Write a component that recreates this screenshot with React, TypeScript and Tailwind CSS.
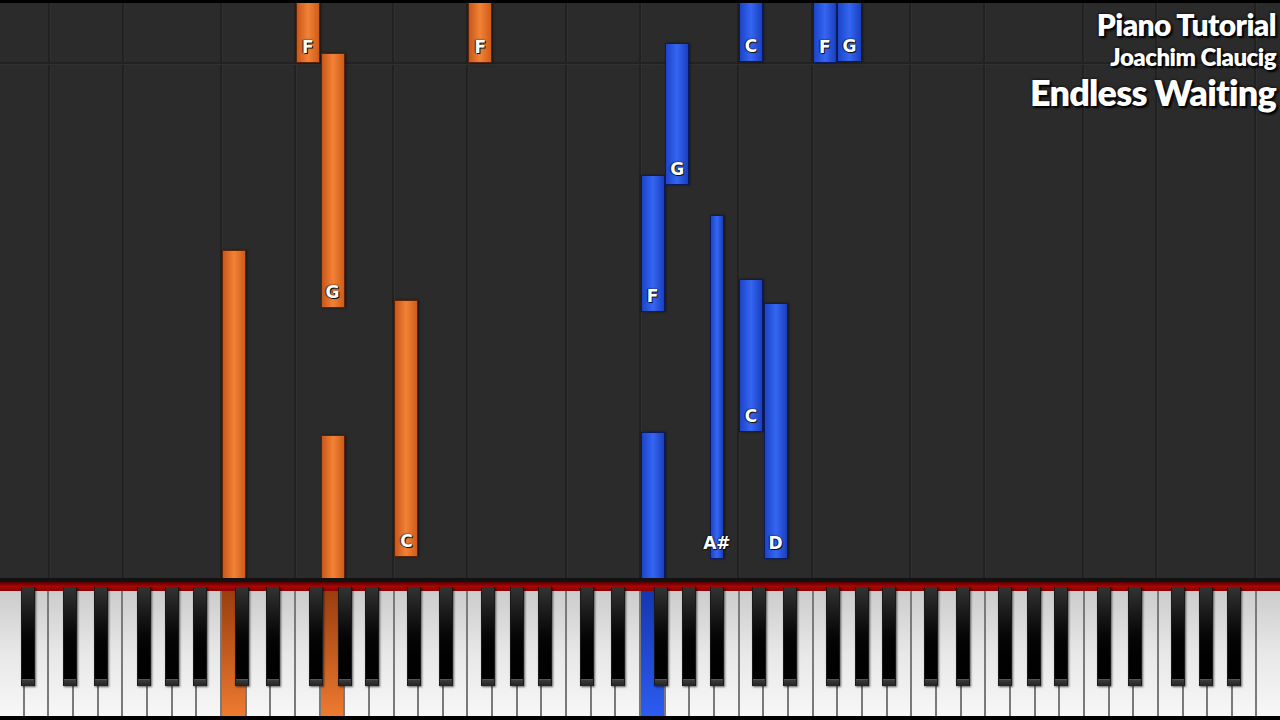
import type { CSSProperties } from "react";

const WHITE_COUNT = 52;
const KEY_W = 1280 / WHITE_COUNT;
const AREA_TOP = 3;

// note names of white keys in an octave starting at C
const whiteNames = ["C", "D", "E", "F", "G", "A", "B"];
// offsets of black keys from the white key boundary (px), by the white key on their left
const blackOffset: Record<string, number> = { C: -4, D: 2.5, F: -4, G: 0, A: 3 };

type Hand = "left" | "right";

interface Note {
    key: number; // white key index (black: the white key on its left)
    black?: boolean;
    top: number;
    bottom: number;
    label?: string;
    hand: Hand;
}

// white key index: A0 = 0, B0 = 1, C1 = 2 ...
const notes: Note[] = [
    { key: 9, top: 250, bottom: 600, hand: "left" },
    { key: 12, top: -10, bottom: 63, label: "F", hand: "left" },
    { key: 13, top: 53, bottom: 308, label: "G", hand: "left" },
    { key: 13, top: 435, bottom: 600, hand: "left" },
    { key: 16, top: 300, bottom: 557, label: "C", hand: "left" },
    { key: 19, top: -10, bottom: 63, label: "F", hand: "left" },
    { key: 26, top: 175, bottom: 312, label: "F", hand: "right" },
    { key: 26, top: 432, bottom: 600, hand: "right" },
    { key: 27, top: 43, bottom: 185, label: "G", hand: "right" },
    { key: 28, black: true, top: 215, bottom: 559, label: "A#", hand: "right" },
    { key: 30, top: -10, bottom: 62, label: "C", hand: "right" },
    { key: 30, top: 279, bottom: 432, label: "C", hand: "right" },
    { key: 31, top: 303, bottom: 559, label: "D", hand: "right" },
    { key: 33, top: -10, bottom: 63, label: "F", hand: "right" },
    { key: 34, top: -10, bottom: 62, label: "G", hand: "right" },
];

const pressed: Record<number, Hand> = { 9: "left", 13: "left", 26: "right" };

function whiteName(i: number) {
    // A0 is index 0
    return whiteNames[(i + 5) % 7];
}

function blackLeft(i: number) {
    // black key sitting between white key i and i + 1
    const boundary = (i + 1) * KEY_W;
    return boundary + blackOffset[whiteName(i)] - 7;
}

const blackKeys: number[] = [];
for (let i = 0; i < WHITE_COUNT - 1; i++) {
    if (whiteName(i) in blackOffset) blackKeys.push(i);
}

const gridLines: number[] = [];
for (let i = 0; i < WHITE_COUNT; i++) {
    const n = whiteName(i);
    if (n === "C" || n === "F") gridLines.push(i);
}

const labelShadow: CSSProperties = {
    textShadow: "1px 1px 0 #111, -1px 0 1px rgba(0,0,0,0.6), 0 0 2px rgba(0,0,0,0.7)",
};

function NoteBar({ note }: { note: Note }) {
    const left = note.black ? blackLeft(note.key) : note.key * KEY_W + 0.5;
    const width = note.black ? 14 : KEY_W - 0.5;
    const color =
        note.hand === "left"
            ? "border-[#5a2406] bg-gradient-to-r from-[#c9561a] via-[#f28236] to-[#cf5c1a]"
            : "border-[#0b1a5c] bg-gradient-to-r from-[#1c44c8] via-[#3566f2] to-[#1a3fbd]";
    return (
        <div
            className={`absolute border ${color} flex items-end justify-center shadow-[1px_0_2px_rgba(0,0,0,0.5)]`}
            style={{ left, width, top: note.top - AREA_TOP, height: note.bottom - note.top }}
        >
            {note.label && (
                <span
                    className="mb-[6px] text-white font-bold text-[17px] leading-none whitespace-nowrap"
                    style={{ fontFamily: '"DejaVu Sans", Verdana, sans-serif', ...labelShadow }}
                >
                    {note.label}
                </span>
            )}
        </div>
    );
}

export default function App() {
    return (
        <div className="w-[1280px] h-[720px] flex flex-col bg-black overflow-hidden">
            <div className="h-[3px] bg-black" />

            {/* falling notes */}
            <div className="relative h-[575px] bg-[#2b2b2b] overflow-hidden">
                {gridLines.map(i => (
                    <div
                        key={i}
                        className="absolute top-0 bottom-0 w-[3px] bg-[#212121] border-r border-[#303030]"
                        style={{ left: i * KEY_W - 1.5 }}
                    />
                ))}
                <div className="absolute left-0 right-0 top-[59px] h-[3px] bg-[#222222] border-b border-[#313131]" />

                {notes.map((n, i) => (
                    <NoteBar key={i} note={n} />
                ))}

                <div
                    className="absolute right-[4px] top-0 flex flex-col items-end text-white font-extrabold"
                    style={{
                        fontFamily: 'Lato, "Open Sans", sans-serif',
                        textShadow: "2px 2px 2px #000, 0 0 3px #000",
                    }}
                >
                    <span className="text-[30px] leading-[34px] tracking-[-0.6px] mt-[4px]">Piano Tutorial</span>
                    <span className="text-[24px] leading-[28px] tracking-[-0.5px] mt-[2px]">Joachim Claucig</span>
                    <span className="text-[36px] leading-[40px] tracking-[-0.8px] mt-[1px]">Endless Waiting</span>
                </div>
            </div>

            {/* keyboard */}
            <div className="relative h-[138px] flex flex-col">
                <div className="h-[4px] bg-[#121212]" />
                <div className="h-[9px] bg-gradient-to-b from-[#5a0000] via-[#a80808] to-[#8a0202]" />
                <div className="flex flex-1">
                    {Array.from({ length: WHITE_COUNT }).map((_, i) => {
                        const hand = pressed[i];
                        const fill =
                            hand === "left"
                                ? "bg-gradient-to-b from-[#9a3e10] to-[#ee7a30]"
                                : hand === "right"
                                  ? "bg-gradient-to-b from-[#1736b0] to-[#2c5cf0]"
                                  : "bg-gradient-to-b from-[#cccccc] via-[#e8e8e8] to-[#f7f7f7]";
                        return (
                            <div
                                key={i}
                                className={`flex-1 h-full border-l-2 border-[#7a7a7a] ${fill}`}
                                style={i === 0 ? { borderLeftWidth: 0 } : undefined}
                            />
                        );
                    })}
                </div>
                {blackKeys.map(i => (
                    <div
                        key={i}
                        className="absolute top-[9px] h-[99px] w-[14px] flex flex-col border-x border-[#1a1a1a] bg-gradient-to-b from-[#333333] via-[#060606] to-black shadow-[1px_1px_2px_rgba(0,0,0,0.6)]"
                        style={{ left: blackLeft(i) }}
                    >
                        <div className="flex-1" />
                        <div className="h-[7px] bg-gradient-to-b from-[#3c3c3c] to-[#222222] border-t border-[#555555]" />
                    </div>
                ))}
            </div>
            <div className="h-[4px] bg-black" />
        </div>
    );
}
